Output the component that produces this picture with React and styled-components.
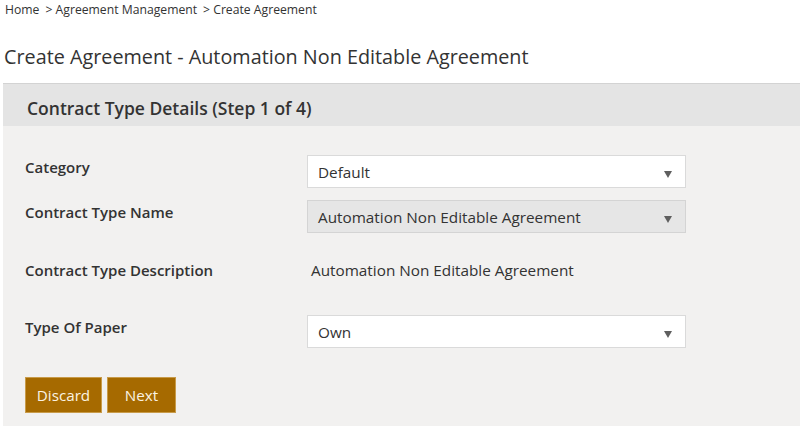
import React from 'react';
import styled, { createGlobalStyle } from 'styled-components';

const GlobalStyle = createGlobalStyle`
  body {
    margin: 0;
    background: #fff;
    font-family: "Open Sans", "Noto Sans", Arial, sans-serif;
    color: #333;
  }
`;

const Page = styled.div`
  width: 800px;
  height: 429px;
  overflow: hidden;
`;

const Breadcrumb = styled.div`
  display: flex;
  gap: 6px;
  padding: 1px 0 0 5px;
  height: 19px;
  font-size: 12.2px;
  line-height: 17px;
  color: #333;
`;

const Crumb = styled.span`
  white-space: nowrap;
`;

const Title = styled.h1`
  margin: 23px 0 0 4px;
  font-size: 19.8px;
  font-weight: 400;
  line-height: 28px;
  color: #333;
`;

const Panel = styled.section`
  margin: 12px 0 0 3px;
  border-top: 1px solid #d3d3d3;
  background: #f2f1f0;
  padding-bottom: 13px;
`;

const PanelHeader = styled.h2`
  margin: 0;
  box-sizing: border-box;
  height: 42px;
  display: flex;
  align-items: center;
  padding: 5px 0 0 24px;
  background: #e4e4e4;
  font-size: 17.5px;
  font-weight: 600;
  color: #333;
`;

const PanelBody = styled.div`
  padding: 29px 0 0 22px;
`;

const Row = styled.div`
  display: grid;
  grid-template-columns: 282px 379px;
  align-items: ${(p) => (p.$center ? 'center' : 'start')};
  min-height: 33px;
  margin-bottom: ${(p) => p.$gap}px;
`;

const Label = styled.div`
  font-size: 15px;
  font-weight: 600;
  line-height: 20px;
  padding-top: ${(p) => (p.$center ? 0 : 2)}px;
  color: #333;
`;

const Select = styled.div`
  position: relative;
  box-sizing: border-box;
  height: 33px;
  display: flex;
  align-items: center;
  padding-left: 10px;
  border: 1px solid ${(p) => (p.$disabled ? '#d4d4d4' : '#dadada')};
  background: ${(p) => (p.$disabled ? '#e6e6e6' : '#fff')};
  font-size: 15.3px;
  color: #333;
`;

const Arrow = styled.span`
  position: absolute;
  right: 13px;
  top: 15px;
  width: 0;
  height: 0;
  border-left: 4.5px solid transparent;
  border-right: 4.5px solid transparent;
  border-top: 7px solid #5f5f5f;
`;

const Value = styled.div`
  padding-left: 4px;
  font-size: 15.3px;
  color: #333;
`;

const Actions = styled.div`
  display: flex;
  gap: 5px;
`;

const Button = styled.button`
  box-sizing: border-box;
  height: 36px;
  width: ${(p) => p.$width}px;
  padding: 0;
  border: 1px solid #c89b4a;
  background: #a66a00;
  color: #fbf3e2;
  font-family: inherit;
  font-size: 15.2px;
  cursor: pointer;
`;

const fields = [
  { label: 'Category', value: 'Default', gap: 12 },
  { label: 'Contract Type Name', value: 'Automation Non Editable Agreement', disabled: true, gap: 20 },
  { label: 'Contract Type Description', text: 'Automation Non Editable Agreement', gap: 29 },
  { label: 'Type Of Paper', value: 'Own', gap: 29 },
];

export default function App() {
  return (
    <Page>
      <GlobalStyle />
      <Breadcrumb>
        <Crumb>Home</Crumb>
        <Crumb>&gt; Agreement Management</Crumb>
        <Crumb>&gt; Create Agreement</Crumb>
      </Breadcrumb>
      <Title>Create Agreement - Automation Non Editable Agreement</Title>
      <Panel>
        <PanelHeader>Contract Type Details (Step 1 of 4)</PanelHeader>
        <PanelBody>
          {fields.map((f) => (
            <Row key={f.label} $gap={f.gap} $center={!!f.text}>
              <Label $center={!!f.text}>{f.label}</Label>
              {f.text ? (
                <Value>{f.text}</Value>
              ) : (
                <Select $disabled={f.disabled}>
                  {f.value}
                  <Arrow />
                </Select>
              )}
            </Row>
          ))}
          <Actions>
            <Button $width={77}>Discard</Button>
            <Button $width={69}>Next</Button>
          </Actions>
        </PanelBody>
      </Panel>
    </Page>
  );
}
